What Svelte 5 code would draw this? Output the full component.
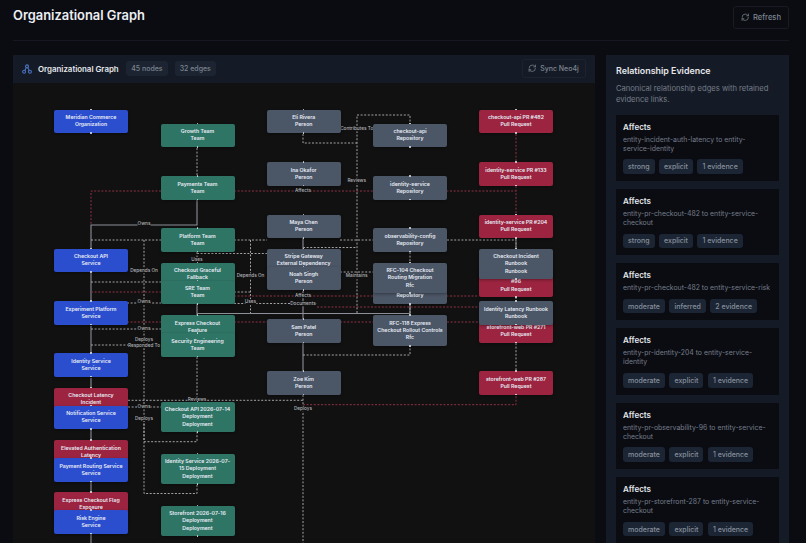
<script>
  const nodes = [
    { x: 54, y: 110, kind: "blue", name: "Meridian Commerce", type: "Organization" },
    { x: 54, y: 249, kind: "blue", name: "Checkout API", type: "Service" },
    { x: 54, y: 301.5, kind: "blue", name: "Experiment Platform", type: "Service" },
    { x: 54, y: 353.5, kind: "blue", name: "Identity Service", type: "Service" },
    { x: 54, y: 388, kind: "red", name: "Checkout Latency Incident", type: "Incident" },
    { x: 54, y: 406, kind: "blue", name: "Notification Service", type: "Service" },
    { x: 54, y: 440.5, kind: "red", name: "Elevated Authentication Latency", type: "Incident" },
    { x: 54, y: 458.5, kind: "blue", name: "Payment Routing Service", type: "Service" },
    { x: 54, y: 492.5, kind: "red", name: "Express Checkout Flag Exposure", type: "Incident" },
    { x: 54, y: 510.5, kind: "blue", name: "Risk Engine", type: "Service" },

    { x: 160.5, y: 124, kind: "green", name: "Growth Team", type: "Team" },
    { x: 160.5, y: 176.5, kind: "green", name: "Payments Team", type: "Team" },
    { x: 160.5, y: 228.5, kind: "green", name: "Platform Team", type: "Team" },
    { x: 160.5, y: 263, kind: "green", name: "Checkout Graceful Fallback", type: "Feature" },
    { x: 160.5, y: 281, kind: "green", name: "SRE Team", type: "Team" },
    { x: 160.5, y: 315.5, kind: "green", name: "Express Checkout\nFeature", type: "Feature" },
    { x: 160.5, y: 333.5, kind: "green", name: "Security Engineering", type: "Team" },
    { x: 160.5, y: 402, kind: "green", name: "Checkout API 2026-07-14 Deployment", type: "Deployment" },
    { x: 160.5, y: 454, kind: "green", name: "Identity Service 2026-07-15 Deployment", type: "Deployment" },
    { x: 160.5, y: 506, kind: "green", name: "Storefront 2026-07-16 Deployment", type: "Deployment" },

    { x: 266.7, y: 110, kind: "gray", name: "Eli Rivera", type: "Person" },
    { x: 266.7, y: 162.5, kind: "gray", name: "Ina Okafor", type: "Person" },
    { x: 266.7, y: 215, kind: "gray", name: "Maya Chen", type: "Person" },
    { x: 266.7, y: 249, kind: "gray", name: "Stripe Gateway", type: "External Dependency" },
    { x: 266.7, y: 267, kind: "gray", name: "Noah Singh", type: "Person" },
    { x: 266.7, y: 319.5, kind: "gray", name: "Sam Patel", type: "Person" },
    { x: 266.7, y: 371.5, kind: "gray", name: "Zoe Kim", type: "Person" },

    { x: 373, y: 124, kind: "gray", name: "checkout-api", type: "Repository" },
    { x: 373, y: 176.5, kind: "gray", name: "identity-service", type: "Repository" },
    { x: 373, y: 228.5, kind: "gray", name: "observability-config", type: "Repository" },
    { x: 373, y: 281, kind: "gray", name: "storefront-web", type: "Repository" },
    { x: 373, y: 263, kind: "gray", name: "RFC-104 Checkout Routing Migration", type: "Rfc" },
    { x: 373, y: 315.5, kind: "gray", name: "RFC-118 Express Checkout Rollout Controls", type: "Rfc" },

    { x: 479, y: 110, kind: "red", name: "checkout-api PR #482", type: "Pull Request" },
    { x: 479, y: 162.5, kind: "red", name: "identity-service PR #133", type: "Pull Request" },
    { x: 479, y: 215, kind: "red", name: "identity-service PR #204", type: "Pull Request" },
    { x: 479, y: 267, kind: "red", name: "observability-config PR #96", type: "Pull Request" },
    { x: 479, y: 249, kind: "gray", name: "Checkout Incident Runbook", type: "Runbook" },
    { x: 479, y: 319.5, kind: "red", name: "storefront-web PR #271", type: "Pull Request" },
    { x: 479, y: 301.5, kind: "gray", name: "Identity Latency Runbook", type: "Runbook" },
    { x: 479, y: 371.5, kind: "red", name: "storefront-web PR #287", type: "Pull Request" }
  ];

  // edge paths use page coordinates, the svg viewBox starts at the canvas corner
  const edges = [
    { d: "M197 148V176", kind: "dash" },
    { d: "M197 200V225H91V249", kind: "solid" },
    { d: "M161 191H91V225", kind: "red" },
    { d: "M234 191H516", kind: "red" },
    { d: "M516 134V162M516 186V215", kind: "red" },
    { d: "M91 240H161M234 240H267M340 240H373M447 240H516V249", kind: "dash" },
    { d: "M144 240V420", kind: "dash" },
    { d: "M144 420V441.7H197V432", kind: "dash" },
    { d: "M144 420V493.5H197V484", kind: "dash" },
    { d: "M250.5 240V313", kind: "dash" },
    { d: "M197 252V263", kind: "dash" },
    { d: "M197 253.5H267", kind: "dash" },
    { d: "M303 247.5H357", kind: "dash" },
    { d: "M91 273V301", kind: "solid" },
    { d: "M91 326V354", kind: "solid" },
    { d: "M91 378V388M91 429V440M91 482V492M91 534V543", kind: "solid" },
    { d: "M91 282H161", kind: "dash" },
    { d: "M91 292H161", kind: "red" },
    { d: "M234 292H250", kind: "dash" },
    { d: "M234 296H479", kind: "red" },
    { d: "M91 303H161", kind: "dash" },
    { d: "M234 303.5H317", kind: "dash" },
    { d: "M317 307H479", kind: "red" },
    { d: "M197 304V313.5H410V304M410 313.5V316M197 313.5V316", kind: "solid" },
    { d: "M91 322H161M234 322H267M340 322H373M447 322H479", kind: "red" },
    { d: "M91 329H161", kind: "dash" },
    { d: "M91 345H135", kind: "dash" },
    { d: "M128 407H161", kind: "dash" },
    { d: "M128 400.3H303", kind: "dash" },
    { d: "M197 357V402", kind: "dash" },
    { d: "M303 395V543", kind: "dash" },
    { d: "M303 404.7H516V395", kind: "red" },
    { d: "M303 238V249M303 291V320M303 343V372", kind: "solid" },
    { d: "M303 355H410V346", kind: "dash" },
    { d: "M303 134V143H357", kind: "dash" },
    { d: "M357 313V115H410V124", kind: "dash" },
    { d: "M340 272H373", kind: "dash" },
    { d: "M410 252V263M410 304V316", kind: "dash" },
    { d: "M516 238V249M516 297V302M516 343V372", kind: "dash" }
  ];

  const edgeLabels = [
    { x: 144, y: 224.5, text: "Owns" },
    { x: 303, y: 191, text: "Affects" },
    { x: 197, y: 260.5, text: "Uses" },
    { x: 144, y: 271, text: "Depends On" },
    { x: 250.5, y: 276.5, text: "Depends On" },
    { x: 144, y: 302.7, text: "Owns" },
    { x: 250.5, y: 302.7, text: "Uses" },
    { x: 303, y: 296, text: "Affects" },
    { x: 303, y: 304.3, text: "Documents" },
    { x: 144, y: 329, text: "Owns" },
    { x: 144, y: 340.3, text: "Deploys" },
    { x: 144, y: 346, text: "Responded To" },
    { x: 197, y: 400.3, text: "Reviews" },
    { x: 144, y: 407.3, text: "Owns" },
    { x: 144, y: 419, text: "Deploys" },
    { x: 303, y: 409, text: "Deploys" },
    { x: 356.7, y: 129, text: "Contributes To" },
    { x: 356.7, y: 181, text: "Reviews" },
    { x: 356.7, y: 276.7, text: "Maintains" }
  ];

  const evidence = [
    { path: "entity-incident-auth-latency to entity-service-identity", tags: ["strong", "explicit", "1 evidence"] },
    { path: "entity-pr-checkout-482 to entity-service-checkout", tags: ["strong", "explicit", "1 evidence"] },
    { path: "entity-pr-checkout-482 to entity-service-risk", tags: ["moderate", "inferred", "2 evidence"] },
    { path: "entity-pr-identity-204 to entity-service-identity", tags: ["moderate", "explicit", "1 evidence"] },
    { path: "entity-pr-observability-96 to entity-service-checkout", tags: ["moderate", "explicit", "1 evidence"] },
    { path: "entity-pr-storefront-287 to entity-service-checkout", tags: ["moderate", "explicit", "1 evidence"] }
  ];
</script>

{#snippet syncIcon()}
  <svg class="sync" viewBox="0 0 24 24" fill="none" stroke="currentColor" stroke-width="2" stroke-linecap="round" stroke-linejoin="round">
    <path d="M3 12a9 9 0 0 1 9-9 9.75 9.75 0 0 1 6.74 2.74L21 8" />
    <path d="M21 3v5h-5" />
    <path d="M21 12a9 9 0 0 1-9 9 9.75 9.75 0 0 1-6.74-2.74L3 16" />
    <path d="M8 16H3v5" />
  </svg>
{/snippet}

<div class="page">
  <header class="topbar">
    <h1>Organizational Graph</h1>
    <button class="refresh">{@render syncIcon()}Refresh</button>
  </header>

  <main class="content">
    <section class="graph">
      <div class="graph-head">
        <svg class="logo" viewBox="0 0 24 24" fill="none" stroke="currentColor" stroke-width="2.6">
          <circle cx="12" cy="5.5" r="3.5" />
          <circle cx="5" cy="18.5" r="3.5" />
          <circle cx="19" cy="18.5" r="3.5" />
          <path d="M10.3 8.6 6.7 15.4M13.7 8.6l3.6 6.8" />
        </svg>
        <span class="graph-title">Organizational Graph</span>
        <span class="pill">45 nodes</span>
        <span class="pill">32 edges</span>
        <button class="sync-btn">{@render syncIcon()}Sync Neo4j</button>
      </div>

      <div class="canvas">
        <svg class="edges" viewBox="13 83 582 460" width="582" height="460">
          {#each edges as edge}
            <path class={edge.kind} d={edge.d} />
          {/each}
        </svg>
        {#each edgeLabels as label}
          <span class="edge-label" style="left: {label.x - 13}px; top: {label.y - 83}px">{label.text}</span>
        {/each}
        {#each nodes as node}
          <div class="node {node.kind}" style="left: {node.x - 13}px; top: {node.y - 83}px">
            <div>{node.name}</div>
            <div>{node.type}</div>
          </div>
        {/each}
      </div>
    </section>

    <aside class="side">
      <h2>Relationship Evidence</h2>
      <p class="intro">Canonical relationship edges with retained evidence links.</p>
      <div class="cards">
        {#each evidence as item}
          <article class="card">
            <h3>Affects</h3>
            <p>{item.path}</p>
            <div class="tags">
              {#each item.tags as tag}
                <span class="pill">{tag}</span>
              {/each}
            </div>
          </article>
        {/each}
      </div>
    </aside>
  </main>
</div>

<style>
  :global(html), :global(body) {
    margin: 0;
    background: #0a0c12;
    overflow: hidden;
  }
  .page {
    height: 543px;
    overflow: hidden;
    padding: 0 17px 0 13px;
    box-sizing: border-box;
    font-family: Inter, "Noto Sans", sans-serif;
    color: #e5e7eb;
    display: flex;
    flex-direction: column;
  }
  .topbar {
    height: 40.5px;
    flex: none;
    box-sizing: border-box;
    display: flex;
    justify-content: space-between;
    align-items: flex-start;
    border-bottom: 1px solid #151820;
  }
  h1 {
    margin: 6px 0 0;
    font-size: 12.9px;
    line-height: 20px;
    font-weight: 600;
    color: #eceef2;
  }
  button {
    display: flex;
    align-items: center;
    font-family: inherit;
    background: transparent;
    color: #7f8691;
    padding: 0;
  }
  .refresh {
    margin-top: 6px;
    width: 56px;
    height: 23px;
    box-sizing: border-box;
    justify-content: center;
    gap: 3.5px;
    font-size: 7.6px;
    font-weight: 500;
    border: 1px solid #181b24;
    border-radius: 3px;
  }
  .sync {
    width: 8.5px;
    height: 8.5px;
  }
  .content {
    margin-top: 14px;
    flex: 1;
    min-height: 0;
    display: grid;
    grid-template-columns: 1fr 183px;
    gap: 11px;
  }
  .graph {
    display: flex;
    flex-direction: column;
    min-height: 0;
  }
  .graph-head {
    height: 28px;
    flex: none;
    background: #151b26;
    display: flex;
    align-items: center;
    padding: 0 9.5px 0 9px;
    box-sizing: border-box;
  }
  .logo {
    width: 10px;
    height: 10px;
    color: #4c74c4;
    margin-right: 6px;
  }
  .graph-title {
    font-size: 7.9px;
    font-weight: 600;
    color: #e5e7eb;
    margin-right: 7.5px;
  }
  .graph-head .pill {
    margin-right: 7px;
    background: #1c2431;
    color: #7b8390;
  }
  .pill {
    height: 14.5px;
    padding: 0 5px;
    display: inline-flex;
    align-items: center;
    border-radius: 3px;
    background: #1c2533;
    color: #87909d;
    font-size: 7px;
    font-weight: 500;
  }
  .sync-btn {
    margin-left: auto;
    width: 64px;
    height: 18.5px;
    box-sizing: border-box;
    justify-content: center;
    gap: 3.5px;
    font-size: 7px;
    font-weight: 500;
    border: 1px solid #1c2230;
    border-radius: 3px;
  }
  .canvas {
    position: relative;
    flex: 1;
    background: #111112;
    overflow: hidden;
  }
  .edges {
    position: absolute;
    left: 0;
    top: 0;
  }
  .edges path {
    fill: none;
    stroke-width: 1;
  }
  .edges .dash {
    stroke: #a3a3a3;
    stroke-dasharray: 2 1.6;
  }
  .edges .solid {
    stroke: #8d9098;
    stroke-width: 1.1;
  }
  .edges .red {
    stroke: #8f3244;
    stroke-dasharray: 2 1.6;
  }
  .edge-label {
    position: absolute;
    transform: translate(-50%, -50%);
    font-size: 4.7px;
    line-height: 5.5px;
    font-weight: 500;
    color: #b4b6ba;
    background: #111112;
    white-space: nowrap;
  }
  .node {
    position: absolute;
    width: 74px;
    box-sizing: border-box;
    padding: 4.5px 4px;
    border-radius: 2px;
    text-align: center;
    font-size: 5.2px;
    line-height: 7.25px;
    font-weight: 600;
    color: #e8edf5;
    white-space: pre-line;
    box-shadow: 0 1px 3px rgba(0, 0, 0, 0.35);
  }
  .node::before, .node::after {
    content: "";
    position: absolute;
    left: 36px;
    width: 1.6px;
    height: 1.6px;
    border-radius: 50%;
    background: #d6dae0;
  }
  .node::before {
    top: -0.8px;
  }
  .node::after {
    bottom: -0.8px;
  }
  .blue {
    background: #2b4ecf;
  }
  .green {
    background: #2f7566;
  }
  .gray {
    background: #4b5667;
  }
  .red {
    background: #9c2440;
  }
  .side {
    background: #151b26;
    padding: 10.5px 10px 0;
    min-height: 0;
    overflow: hidden;
  }
  h2 {
    margin: 0;
    font-size: 8.9px;
    line-height: 12px;
    font-weight: 600;
    color: #e5e7eb;
  }
  .intro {
    margin: 5.5px 0 0;
    font-size: 7.6px;
    line-height: 11.5px;
    color: #767d8a;
  }
  .cards {
    margin-top: 9px;
    display: flex;
    flex-direction: column;
    gap: 8px;
  }
  .card {
    background: #0a0c12;
    padding: 7px;
  }
  h3 {
    margin: 0;
    font-size: 8px;
    line-height: 10px;
    font-weight: 600;
    color: #e5e7eb;
  }
  .card p {
    margin: 3px 0 0;
    font-size: 6.9px;
    line-height: 9px;
    color: #767d8a;
  }
  .tags {
    margin-top: 6.8px;
    display: flex;
    gap: 4.5px;
  }
</style>
